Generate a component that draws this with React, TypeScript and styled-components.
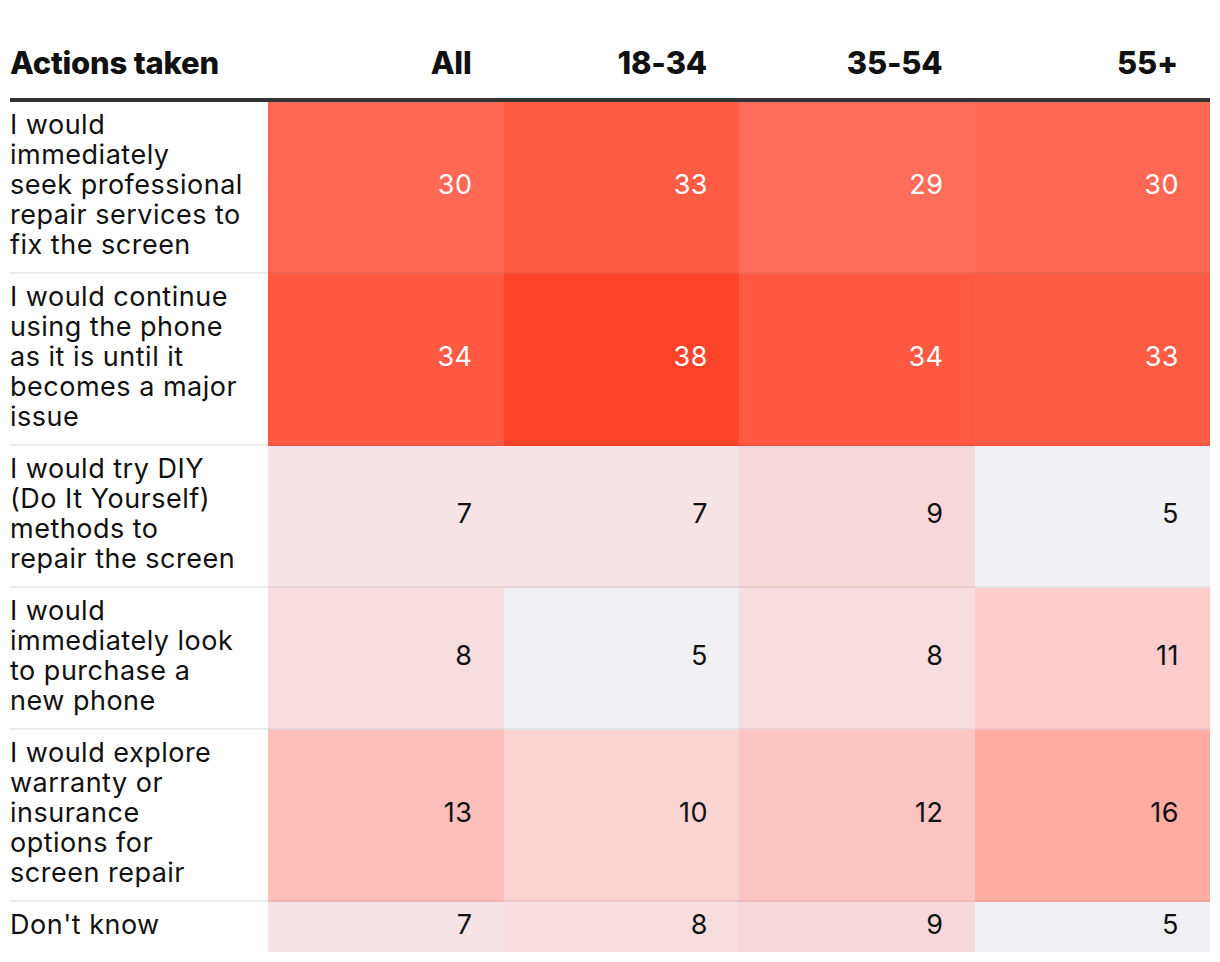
import React from "react";
import styled, { createGlobalStyle } from "styled-components";

const GlobalStyle = createGlobalStyle`
    body {
        margin: 0;
        background: #ffffff;
        font-family: Inter, "Noto Sans", sans-serif;
        color: #111111;
    }
`;

const Table = styled.div`
    margin: 0 10px;
    padding-top: 45px;
`;

const Columns = styled.div`
    display: grid;
    grid-template-columns: 258px repeat(4, 1fr);
`;

const HeaderRow = styled(Columns)`
    border-bottom: 4px solid #333333;
`;

const HeaderCell = styled.div<{ numeric?: boolean }>`
    font-size: 31px;
    font-weight: 800;
    line-height: 36px;
    letter-spacing: -0.2px;
    padding: 0 ${props => props.numeric ? '32px' : '0'} 17px 0;
    text-align: ${props => props.numeric ? 'right' : 'left'};
`;

const Row = styled(Columns)`
    &:last-child > div {
        border-bottom: none;
    }
`;

const Label = styled.div`
    font-size: 27px;
    line-height: 30px;
    letter-spacing: 0.5px;
    white-space: nowrap;
    padding: 8px 0 12px;
    border-bottom: 2px solid rgba(0, 0, 0, 0.08);
`;

const Value = styled.div<{ bg: string; light: boolean }>`
    display: flex;
    align-items: center;
    justify-content: flex-end;
    padding: 0 31px 5px 0;
    font-size: 27px;
    letter-spacing: 0.5px;
    background: ${props => props.bg};
    color: ${props => props.light ? '#ffffff' : '#111111'};
    border-bottom: 2px solid rgba(0, 0, 0, 0.05);
`;

const shades: Record<number, string> = {
    5: '#f0f0f5',
    7: '#f5e3e6',
    8: '#f8dde0',
    9: '#f8d7da',
    10: '#fad3d3',
    11: '#fdcccb',
    12: '#fdc5c1',
    13: '#febfba',
    16: '#ffaca2',
    29: '#ff6d5b',
    30: '#ff6854',
    33: '#ff5b45',
    34: '#ff5843',
    38: '#ff432b',
};

const groups = ['All', '18-34', '35-54', '55+'];

// lines are kept as in the source chart so the wrapping matches
const rows = [
    { lines: ['I would', 'immediately', 'seek professional', 'repair services to', 'fix the screen'], values: [30, 33, 29, 30] },
    { lines: ['I would continue', 'using the phone', 'as it is until it', 'becomes a major', 'issue'], values: [34, 38, 34, 33] },
    { lines: ['I would try DIY', '(Do It Yourself)', 'methods to', 'repair the screen'], values: [7, 7, 9, 5] },
    { lines: ['I would', 'immediately look', 'to purchase a', 'new phone'], values: [8, 5, 8, 11] },
    { lines: ['I would explore', 'warranty or', 'insurance', 'options for', 'screen repair'], values: [13, 10, 12, 16] },
    { lines: ["Don't know"], values: [7, 8, 9, 5] },
];

function App() {
    return (
        <>
            <GlobalStyle />
            <Table>
                <HeaderRow>
                    <HeaderCell>Actions taken</HeaderCell>
                    {groups.map(g => <HeaderCell numeric key={g}>{g}</HeaderCell>)}
                </HeaderRow>
                {rows.map(row => (
                    <Row key={row.lines.join(' ')}>
                        <Label>
                            {row.lines.map((line, i) => (
                                <React.Fragment key={i}>
                                    {i > 0 && <br />}
                                    {line}
                                </React.Fragment>
                            ))}
                        </Label>
                        {row.values.map((v, i) => (
                            <Value key={i} bg={shades[v]} light={v >= 20}>{v}</Value>
                        ))}
                    </Row>
                ))}
            </Table>
        </>
    );
}

export default App;
